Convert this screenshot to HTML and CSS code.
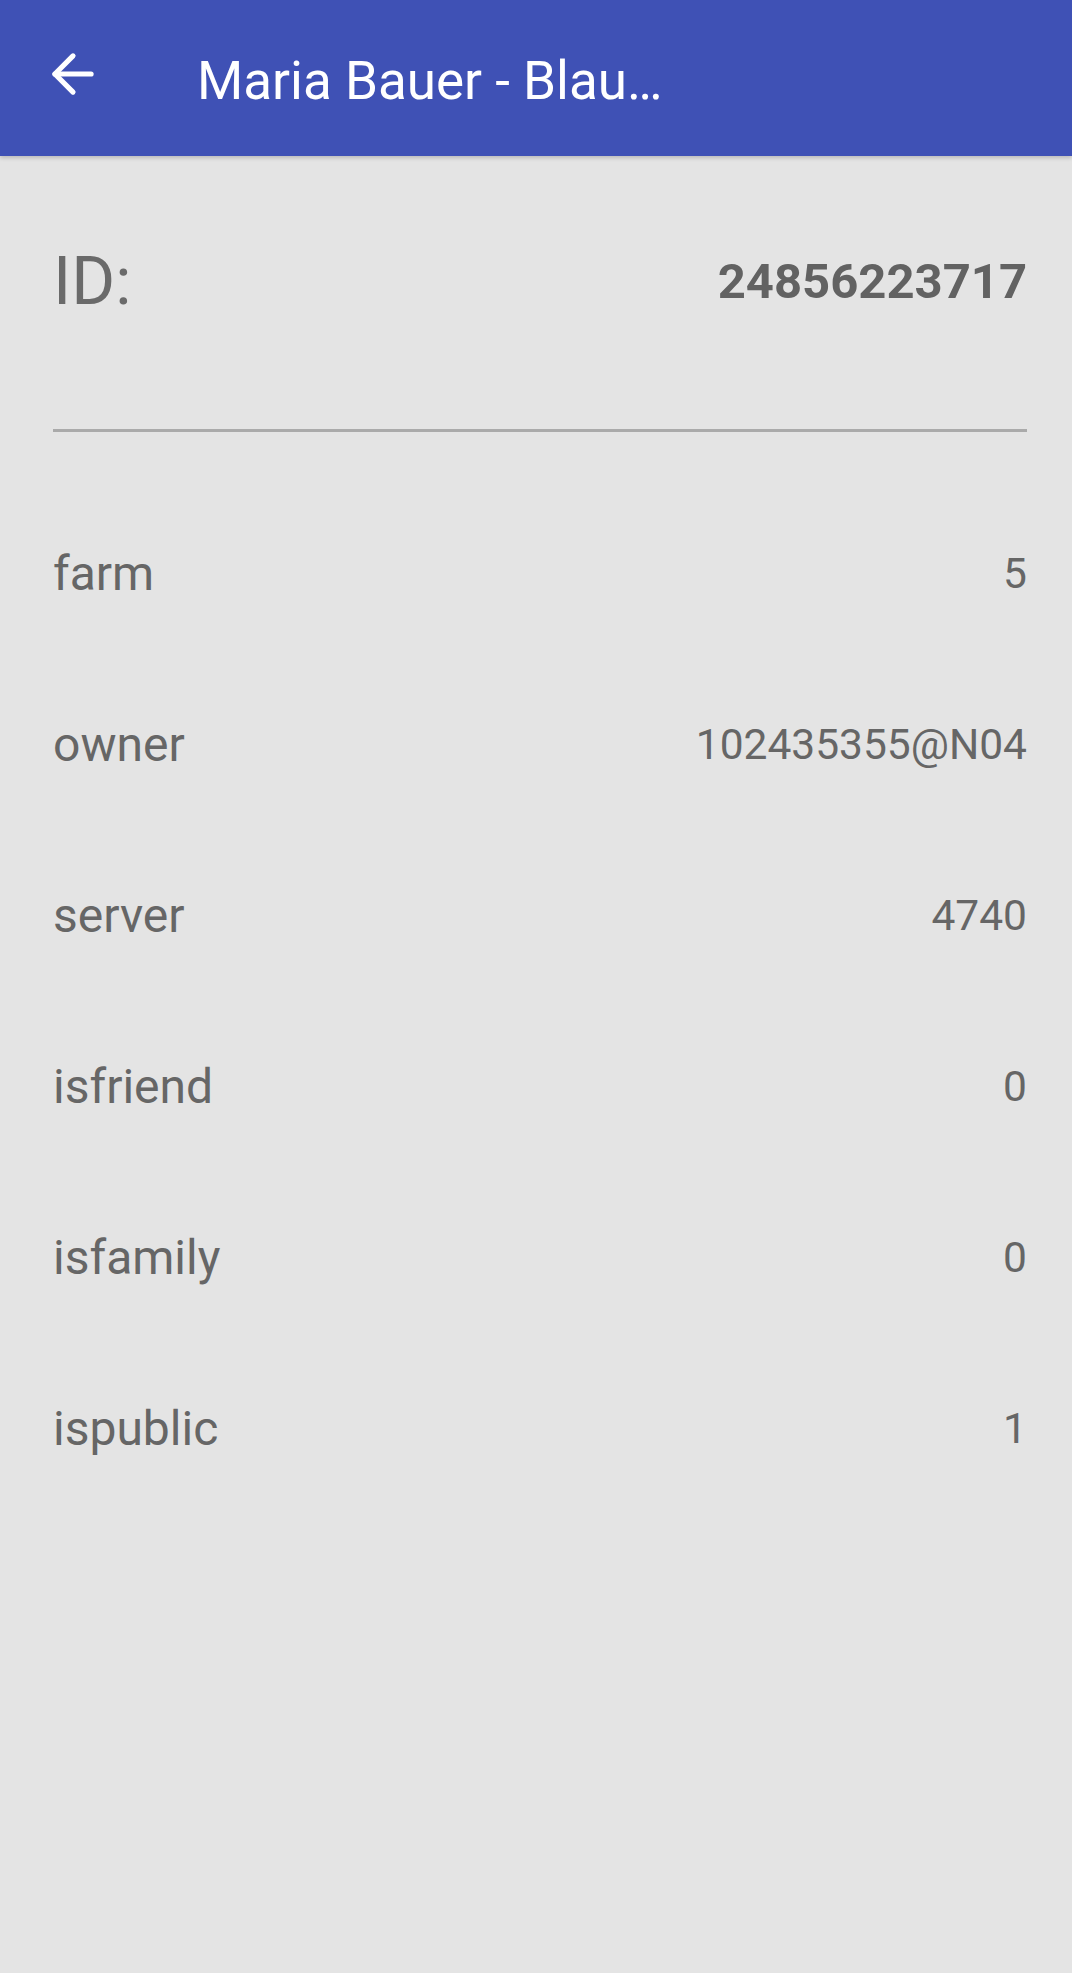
FILE: index.html
```html
<!DOCTYPE html>
<html>
<head>
<meta charset="utf-8">
<link rel="stylesheet" href="styles.css">
</head>
<body>
<header class="appbar">
  <svg class="back" viewBox="0 0 24 24" fill="none" stroke="#fff" stroke-width="2" stroke-linecap="round" stroke-linejoin="round">
    <path d="M19 12H5"/>
    <path d="M12 19l-7-7 7-7"/>
  </svg>
  <div class="title">Maria Bauer - Blau…</div>
</header>
<main class="content">
  <div class="id-row">
    <span class="id-label">ID:</span>
    <span class="id-value">24856223717</span>
  </div>
  <div class="divider"></div>
  <div class="rows">
    <div class="row"><span class="key">farm</span><span class="val">5</span></div>
    <div class="row"><span class="key">owner</span><span class="val">102435355@N04</span></div>
    <div class="row"><span class="key">server</span><span class="val">4740</span></div>
    <div class="row"><span class="key">isfriend</span><span class="val">0</span></div>
    <div class="row"><span class="key">isfamily</span><span class="val">0</span></div>
    <div class="row"><span class="key">ispublic</span><span class="val">1</span></div>
  </div>
</main>
</body>
</html>
```

FILE: styles.css
```css
html, body {
  margin: 0;
  padding: 0;
}
body {
  background: #e4e4e4;
  font-family: Roboto, "Noto Sans", "Liberation Sans", sans-serif;
  color: #666666;
  min-height: 1973px;
}
.appbar {
  height: 156px;
  background: #3f51b5;
  display: flex;
  align-items: flex-start;
  box-shadow: 0 2px 4px rgba(0, 0, 0, 0.18);
  position: relative;
}
.back {
  width: 62px;
  height: 62px;
  margin-left: 42px;
  margin-top: 43px;
  flex: none;
}
.title {
  color: #ffffff;
  font-size: 53px;
  line-height: 62px;
  margin-top: 50px;
  margin-left: 93px;
  white-space: nowrap;
}
.content {
  padding: 0 45px 0 53px;
}
.id-row {
  height: 250px;
  display: flex;
  align-items: center;
  justify-content: space-between;
}
.id-label {
  font-size: 67px;
  color: #6a6a6a;
}
.id-value {
  font-size: 49px;
  font-weight: bold;
  color: #626262;
}
.divider {
  margin-top: 23px;
  height: 3px;
  background: #aaaaaa;
}
.rows {
  margin-top: 56px;
}
.row {
  height: 171px;
  display: flex;
  align-items: center;
  justify-content: space-between;
}
.key {
  font-size: 48px;
}
.val {
  font-size: 42.5px;
}
```
